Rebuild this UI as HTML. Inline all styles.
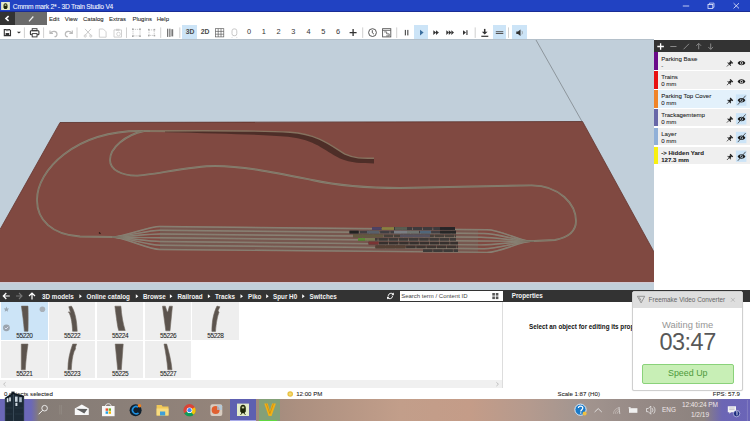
<!DOCTYPE html>
<html><head><meta charset="utf-8">
<style>
*{margin:0;padding:0;box-sizing:border-box}
html,body{width:750px;height:421px;overflow:hidden;background:#fff;font-family:"Liberation Sans",sans-serif;}
.a{position:absolute}
#menu,.row,.cell,#status,#title{-webkit-text-stroke:0.07px currentColor}
svg{position:absolute;left:0;top:0;overflow:visible}
#title{left:0;top:0;width:750px;height:12px;background:linear-gradient(#2142c2 0,#2142c2 10.6px,#1a2c94 10.6px,#1a2c94 12px);color:#f4f6ff;font-size:6.7px;line-height:12px;letter-spacing:-0.25px}
#menu{left:0;top:12px;width:750px;height:12.6px;background:#fff;font-size:6px;color:#1e1e1e}
#tool{left:0;top:24.6px;width:750px;height:14.4px;background:#fff}
#view{left:0;top:39px;width:654px;height:251px;background:#c1cfda;overflow:hidden;border-top:1px solid #b4c0ca}
#layers{left:654px;top:39.5px;width:96px;height:250.5px;background:#fff}
#nav{left:0;top:290px;width:503px;height:11.5px;background:#333;color:#f4f4f4;font-size:6.3px;font-weight:bold;line-height:13px}
#props{left:503px;top:290px;width:247px;height:11.5px;background:#333;color:#f4f4f4;font-size:6.3px;font-weight:bold;line-height:12.6px}
#grid{left:0;top:301.5px;width:502px;height:78.5px;background:#fff}
#scroll{left:0;top:380px;width:502px;height:8.3px;background:#f0f0f0}
#status{left:0;top:388.3px;width:750px;height:10.7px;background:#fff;font-size:6.1px;line-height:11px;color:#222}
#taskbar{left:0;top:399px;width:750px;height:22px;overflow:hidden;background:linear-gradient(90deg,#6b68b8 0px,#6b68b8 31px,#857c76 39px,#8a7f78 120px,#94847a 220px,#ac9080 300px,#c29e8a 400px,#c49c88 470px,#b49a8e 530px,#a49690 575px,#968a86 640px,#8c827e 704px,#6c66b4 722px,#6a64b8 750px)}
.mi{position:absolute;top:0.9px;line-height:13.4px}
.num{position:absolute;top:0;font-size:6.8px;line-height:14.8px;color:#4a4a4a;font-weight:bold;text-align:center;width:10px}
.row{position:absolute;left:0;width:96px;height:17.8px;background:#efefef;font-size:6.1px;color:#222;line-height:7px}
.row .bar{position:absolute;left:0;top:0;width:4.2px;height:100%}
.row .t{position:absolute;left:7.2px;top:2.6px;white-space:nowrap}
.cell{position:absolute;width:46.6px;height:37.8px;background:#eeeeee;font-size:6.5px;color:#1e1e1e;text-align:center;letter-spacing:-0.35px}
.cell span{position:absolute;left:0;right:0;bottom:0px;line-height:8px}
.cell svg{left:0;top:0}
.tray{position:absolute;color:#f0e8e8;font-size:6px;line-height:7px;text-align:center;white-space:nowrap}
</style></head><body>
<!-- TITLE -->
<div id="title" class="a">
  <svg width="750" height="12">
    <rect x="1.1" y="2" width="8.8" height="8" fill="#e6ecc8"/>
    <path d="M5.5 3.2c1.3 0 2 1 2 2.4v2.2l-1 1.2h-2l-1-1.2v-2.2c0-1.4 0.7-2.4 2-2.4z" fill="#1e2608"/>
    <rect x="4.6" y="4.4" width="1.8" height="1.4" fill="#c8d0a0"/>
    <path d="M682.8 6h6.4" stroke="#e8ecff" stroke-width="0.8"/>
    <rect x="708" y="4.4" width="4.8" height="4" fill="none" stroke="#e8ecff" stroke-width="0.8"/>
    <path d="M709.4 4.4v-1.3h4.6v4.2h-1.2" fill="none" stroke="#e8ecff" stroke-width="0.7"/>
    <path d="M733.6 3.2l5.4 5.2M739 3.2l-5.4 5.2" stroke="#eef0ff" stroke-width="0.8"/>
  </svg>
  <div class="a" style="left:12.8px;top:0.9px">Cmmm mark 2* - 3D Train Studio V4</div>
</div>
<!-- MENU -->
<div id="menu" class="a">
  <div class="a" style="left:0;top:0;width:15px;height:12.6px;background:#333"></div>
  <div class="a" style="left:15px;top:0;width:32px;height:12.6px;background:#6b6b6b"></div>
  <svg width="750" height="13">
    <path d="M8.6 4.2L6 6.5L8.6 8.8" fill="none" stroke="#fff" stroke-width="1.6"/>
    <path d="M29 9.3L33.3 4.5" stroke="#f0f0f0" stroke-width="1.2"/>
  </svg>
  <div class="mi" style="left:49px">Edit</div>
  <div class="mi" style="left:64.8px">View</div>
  <div class="mi" style="left:83px">Catalog</div>
  <div class="mi" style="left:109px">Extras</div>
  <div class="mi" style="left:132.4px">Plugins</div>
  <div class="mi" style="left:156.7px">Help</div>
</div>
<!-- TOOLBAR -->
<div id="tool" class="a">
  <div class="a" style="left:182.4px;top:0.2px;width:15.1px;height:13.8px;background:#cce4f7"></div>
  <div class="a" style="left:414.4px;top:0.2px;width:14.1px;height:13.8px;background:#cce4f7"></div>
  <div class="a" style="left:492.7px;top:0.2px;width:13.6px;height:13.8px;background:#cce4f7"></div>
  <div class="a" style="left:512px;top:0.2px;width:14.7px;height:13.8px;background:#cce4f7"></div>
  <svg width="750" height="15" viewBox="0 24.6 750 15">
    <g stroke="#c4c4c4" stroke-width="0.8">
      <path d="M24.4 27v10.5M43.6 27v10.5M77 27v10.5M126.5 27v10.5M160.7 27v10.5M179.8 27v10.5M362.7 27v10.5M396.7 27v10.5M475.2 27v10.5M508.5 27v10.5"/>
    </g>
    <!-- save -->
    <path d="M4.3 29.2h5.2l1 1v5h-6.2z" fill="none" stroke="#333" stroke-width="1.1"/>
    <rect x="5.6" y="32.6" width="3.6" height="2.6" fill="#333"/>
    <rect x="6" y="29.2" width="2.6" height="1.6" fill="#888"/>
    <polygon points="16.8,31.4 21,31.4 18.9,33.2" fill="#333"/>
    <!-- print -->
    <rect x="32.2" y="28.3" width="4.8" height="2" fill="none" stroke="#333" stroke-width="0.9"/>
    <rect x="30.4" y="30.3" width="8.5" height="4" rx="0.8" fill="none" stroke="#333" stroke-width="1.1"/>
    <rect x="32.2" y="33.2" width="4.8" height="3.3" fill="#fff" stroke="#333" stroke-width="0.9"/>
    <!-- undo redo -->
    <path d="M50 30v3h3M50.5 32.8c1.5-2.5 6.5-2.5 6.5 1c0 1.5-1 2.5-2.5 2.5" fill="none" stroke="#bbb" stroke-width="1.2"/>
    <path d="M72.3 30v3h-3M71.8 32.8c-1.5-2.5-6.5-2.5-6.5 1c0 1.5 1 2.5 2.5 2.5" fill="none" stroke="#bbb" stroke-width="1.2"/>
    <!-- cut -->
    <path d="M85 28.5l6 6.5M91 28.5l-6 6.5" stroke="#c4c4c4" stroke-width="0.9"/>
    <circle cx="85.2" cy="35.6" r="1.1" fill="none" stroke="#c4c4c4" stroke-width="0.8"/>
    <circle cx="90.8" cy="35.6" r="1.1" fill="none" stroke="#c4c4c4" stroke-width="0.8"/>
    <!-- copy -->
    <path d="M99.3 28.6h4l2.8 2.8v5.4h-6.8z" fill="none" stroke="#ccc" stroke-width="0.9"/>
    <!-- paste -->
    <path d="M114 29.5h7.5v7.2h-7.5z" fill="none" stroke="#ccc" stroke-width="0.9"/>
    <rect x="116" y="28.4" width="3.5" height="2" fill="#ccc"/>
    <circle cx="118.5" cy="33.6" r="1.8" fill="none" stroke="#ccc" stroke-width="0.8"/>
    <!-- group/ungroup -->
    <rect x="133" y="29" width="7" height="6.5" fill="none" stroke="#bbb" stroke-width="0.8" stroke-dasharray="1.2,0.8"/>
    <g fill="#aaa"><rect x="132" y="28" width="1.6" height="1.6"/><rect x="139.2" y="28" width="1.6" height="1.6"/><rect x="132" y="35" width="1.6" height="1.6"/><rect x="139.2" y="35" width="1.6" height="1.6"/></g>
    <rect x="149" y="29.5" width="5.2" height="5.5" fill="none" stroke="#bbb" stroke-width="0.8" stroke-dasharray="1.2,0.8"/>
    <g fill="#aaa"><rect x="148" y="28.5" width="1.5" height="1.5"/><rect x="153.7" y="28.5" width="1.5" height="1.5"/><rect x="148" y="34.5" width="1.5" height="1.5"/><rect x="153.7" y="34.5" width="1.5" height="1.5"/></g>
    <!-- layers -->
    <g fill="#777"><rect x="167" y="28.3" width="1.3" height="8.2"/><rect x="169.2" y="28.3" width="1.3" height="8.2"/><rect x="171.4" y="28.8" width="1.8" height="7.2"/></g>
    <!-- grid -->
    <g fill="none" stroke="#555" stroke-width="0.65"><rect x="215.4" y="28.3" width="8.4" height="8.2"/><path d="M218.2 28.3v8.2M221 28.3v8.2M215.4 31h8.4M215.4 33.8h8.4"/></g>
    <!-- train -->
    <rect x="232" y="28.5" width="4.8" height="6.8" rx="2" fill="none" stroke="#c8c8c8" stroke-width="1"/>
    <path d="M232.5 36.5l-0.8 1M236.3 36.5l0.8 1" stroke="#c8c8c8" stroke-width="0.7"/>
    <!-- plus -->
    <path d="M349.6 32.2h7M353.1 28.7v7" stroke="#333" stroke-width="1.3"/>
    <!-- clock -->
    <circle cx="372.5" cy="32.2" r="3.9" fill="none" stroke="#444" stroke-width="0.9"/>
    <path d="M372.3 29.8v2.6l1.6 1.3" fill="none" stroke="#444" stroke-width="0.9"/>
    <!-- calendar -->
    <rect x="382.6" y="28.3" width="8.2" height="8.2" fill="none" stroke="#555" stroke-width="0.9"/>
    <path d="M382.6 30h8.2M384.2 31.5h2.5v2h2.5v2h-3" fill="none" stroke="#555" stroke-width="0.8"/>
    <!-- pause -->
    <rect x="404.8" y="29.5" width="1.2" height="5.5" fill="#555"/><rect x="407.2" y="29.5" width="1.2" height="5.5" fill="#555"/>
    <!-- play -->
    <polygon points="420,29.3 423.6,32.2 420,35.1" fill="#3b6e9e"/>
    <!-- ff -->
    <polygon points="433.3,29.8 436.2,32.2 433.3,34.6" fill="#333"/><polygon points="436,29.8 438.9,32.2 436,34.6" fill="#333"/>
    <polygon points="446.3,29.8 449,32.2 446.3,34.6" fill="#333"/><polygon points="448.8,29.8 451.5,32.2 448.8,34.6" fill="#333"/><polygon points="451.3,29.8 454,32.2 451.3,34.6" fill="#333"/>
    <polygon points="463,29.8 466,32.2 463,34.6" fill="#333"/><rect x="466.4" y="29.8" width="1.1" height="4.8" fill="#333"/>
    <!-- download -->
    <path d="M484.7 28.5v3.8" stroke="#333" stroke-width="1.5"/><polygon points="481.8,31.3 487.6,31.3 484.7,34" fill="#333"/>
    <rect x="481.3" y="35.3" width="7" height="1.2" fill="#333"/>
    <!-- lines -->
    <rect x="495.8" y="30.8" width="7.5" height="1" fill="#555"/><rect x="495.8" y="32.6" width="7.5" height="1" fill="#555"/>
    <!-- speaker -->
    <polygon points="516.3,31 518,31 520.5,29 520.5,35.5 518,33.5 516.3,33.5" fill="#333"/>
    <path d="M521.8 30.5c0.8 0.8 0.8 2.8 0 3.5" fill="none" stroke="#888" stroke-width="0.7"/>
  </svg>
  <div class="num" style="left:185px;width:10px">3D</div>
  <div class="num" style="left:200px;width:10px">2D</div>
  <div class="num" style="left:244px;font-weight:normal;font-size:7.4px;color:#333">0</div>
  <div class="num" style="left:258.9px;font-weight:normal;font-size:7.4px;color:#333">1</div>
  <div class="num" style="left:273.5px;font-weight:normal;font-size:7.4px;color:#333">2</div>
  <div class="num" style="left:288.4px;font-weight:normal;font-size:7.4px;color:#333">3</div>
  <div class="num" style="left:303.5px;font-weight:normal;font-size:7.4px;color:#333">4</div>
  <div class="num" style="left:318.2px;font-weight:normal;font-size:7.4px;color:#333">5</div>
  <div class="num" style="left:333px;font-weight:normal;font-size:7.4px;color:#333">6</div>
</div>
<!-- 3D VIEW -->
<div id="view" class="a">
  <svg width="654" height="251" viewBox="0 40 654 251">
    <polygon points="60,122.5 582.5,121.5 654,252 654,282.2 0,282.2 0,229.5" fill="#804941"/>
    <rect x="0" y="282.2" width="654" height="1" fill="#d6d0dc"/>
    <path d="M0,229.5 L60,122.5 M582.5,121.5 L654,252" stroke="#643630" stroke-width="0.8"/>
    <path d="M60,122.5 L582.5,121.5" stroke="#5a302a" stroke-width="0.8"/>
    <line x1="536" y1="40" x2="582" y2="121.5" stroke="#6a6e72" stroke-width="0.6"/>
    <!-- yard bed -->
    <path d="M160,226.5 L478,229.2 L478,252.3 L160,249.5z" fill="#77574f"/>
    <g fill="none" stroke="#8a8373" stroke-width="1.8">
      <path d="M113,237 L80,236.5 C52,235 37,220 37,200 C37,170 75,131 140,131 L200,131.3"/>
      <path d="M144,131 C125,135 110,148 110,160 C110,170 122,175.6 136,175.6 C150,175.6 190,166 215,166 C243,166 272,172 312,180 C340,186 370,188 400,188 L531,185.3 C560,185 576,205 576,221 C576,233 565,238 555,240 L534,241"/>
    </g>
    <g fill="none" stroke="#716858" stroke-width="0.45">
      <path d="M113,237 L80,236.5 C52,235 37,220 37,200 C37,170 75,131 140,131 L200,131.3"/>
      <path d="M144,131 C125,135 110,148 110,160 C110,170 122,175.6 136,175.6 C150,175.6 190,166 215,166 C243,166 272,172 312,180 C340,186 370,188 400,188 L531,185.3 C560,185 576,205 576,221 C576,233 565,238 555,240 L534,241"/>
    </g>
    <!-- raised track -->
    <path d="M165,131 C220,130.3 265,130.6 290,132 C318,134 330,144.5 345,154 C355,158.5 362,158.2 374,158 L374,163.4 C362,163.4 351,163 340,158.5 C323,150 316,140 288,136.8 C262,134.6 220,133.4 165,132.2z" fill="#4e2e28"/>
    <path d="M150,131 C220,130.5 265,130.8 290,132.2 C318,134.2 330,144.7 345,154.2 C355,158.7 362,158.4 374,158.2" fill="none" stroke="#86725f" stroke-width="1.4"/>
    <!-- yard -->
    <g fill="none" stroke="#8e877a" stroke-width="1.45">
      <path d="M112,237 C124,237 148,226.5 160,226.5 L487,229.7 C501,229.7 520,241.3 531,241.3 L534,241.3"/>
      <path d="M112,237 C124,237 148,230.3 160,230.3 L484,233.5 C498,233.5 520,241.3 531,241.3 L534,241.3"/>
      <path d="M112,237 C124,237 148,234.0 160,234.0 L481,237.2 C495,237.2 520,241.3 531,241.3 L534,241.3"/>
      <path d="M112,237 C124,237 148,237.7 160,237.7 L478,241.0 C492,241.0 520,241.3 531,241.3 L534,241.3"/>
      <path d="M112,237 C124,237 148,241.4 160,241.4 L481,244.9 C495,244.9 520,241.3 531,241.3 L534,241.3"/>
      <path d="M112,237 C124,237 148,245.3 160,245.3 L484,248.7 C498,248.7 520,241.3 531,241.3 L534,241.3"/>
      <path d="M112,237 C124,237 148,249.5 160,249.5 L487,252.4 C501,252.4 520,241.3 531,241.3 L534,241.3"/>
    </g>
    <g fill="none" stroke="#766e60" stroke-width="0.35">
      <path d="M112,237 C124,237 148,226.5 160,226.5 L487,229.7 C501,229.7 520,241.3 531,241.3 L534,241.3"/>
      <path d="M112,237 C124,237 148,230.3 160,230.3 L484,233.5 C498,233.5 520,241.3 531,241.3 L534,241.3"/>
      <path d="M112,237 C124,237 148,234.0 160,234.0 L481,237.2 C495,237.2 520,241.3 531,241.3 L534,241.3"/>
      <path d="M112,237 C124,237 148,237.7 160,237.7 L478,241.0 C492,241.0 520,241.3 531,241.3 L534,241.3"/>
      <path d="M112,237 C124,237 148,241.4 160,241.4 L481,244.9 C495,244.9 520,241.3 531,241.3 L534,241.3"/>
      <path d="M112,237 C124,237 148,245.3 160,245.3 L484,248.7 C498,248.7 520,241.3 531,241.3 L534,241.3"/>
      <path d="M112,237 C124,237 148,249.5 160,249.5 L487,252.4 C501,252.4 520,241.3 531,241.3 L534,241.3"/>
    </g>
    <!-- trains -->
    <g stroke-width="2.8" fill="none">
      <path d="M372,228.5 H455" stroke="#3e3a3c" stroke-dasharray="9.5,0.7"/>
      <path d="M349.5,232.1 H456" stroke="#403e42" stroke-dasharray="9.5,0.7"/>
      <path d="M353,235.8 H456" stroke="#46403a" stroke-dasharray="9.5,0.7"/>
      <path d="M358,239.4 H456" stroke="#3e3a38" stroke-dasharray="9.5,0.7"/>
      <path d="M368.6,243.1 H458" stroke="#36302e" stroke-dasharray="9.5,0.7"/>
      <path d="M375.5,246.9 H458" stroke="#3c3430" stroke-dasharray="9.5,0.7"/>
      <path d="M423,250.6 H458" stroke="#3c3a38" stroke-dasharray="9.5,0.7"/>
      <path d="M372,228.5 h9" stroke="#4e4266"/>
      <path d="M382,228.5 h12" stroke="#8c8040"/>
      <path d="M395,228.5 h12" stroke="#5a5e52"/>
      <path d="M440,228.5 h15" stroke="#262426"/>
      <path d="M349.5,232.1 h9" stroke="#222"/>
      <path d="M367,232.1 h12" stroke="#58606a"/>
      <path d="M394,232.1 h13" stroke="#7a7e84"/>
      <path d="M407,232.1 h12" stroke="#6e7470"/>
      <path d="M420,232.1 h11" stroke="#50667a"/>
      <path d="M440,232.1 h16" stroke="#262626"/>
      <path d="M353,235.8 h30" stroke="#625840"/>
      <path d="M400,235.8 h30" stroke="#56525e"/>
      <path d="M358,239.4 h7" stroke="#5a8a34"/>
      <path d="M365,239.4 h10" stroke="#7a7a54"/>
      <path d="M368.6,243.1 h10" stroke="#7a3434"/>
      <path d="M375.5,246.9 h30" stroke="#544034"/>
    </g>
    <path d="M99 232.5l1.5 1.3" stroke="#2a1a16" stroke-width="1.2"/>
  </svg>
</div>
<!-- LAYERS -->
<div id="layers" class="a">
  <div class="a" style="left:0;top:0.5px;width:96px;height:11.9px;background:#333"></div>
  <div class="row" style="top:12.5px"><div class="bar" style="background:#6a0a8a"></div><div class="t">Parking Base<br>-</div></div>
  <div class="row" style="top:31.4px"><div class="bar" style="background:#e81010"></div><div class="t">Trains<br>0 mm</div></div>
  <div class="row" style="top:50.3px;background:#e3f1fb"><div class="bar" style="background:#f08428"></div><div class="t">Parking Top Cover<br>0 mm</div></div>
  <div class="row" style="top:69.2px"><div class="bar" style="background:#6868a8"></div><div class="t">Trackagemtemp<br>0 mm</div></div>
  <div class="row" style="top:88.1px"><div class="bar" style="background:#90b0d8"></div><div class="t">Layer<br>0 mm</div></div>
  <div class="row" style="top:107px"><div class="bar" style="background:#f8f010"></div><div class="t" style="font-weight:bold">-&gt; Hidden Yard<br>127.3 mm</div></div>
  <svg width="96" height="250" viewBox="654 39.5 96 250">
    <path d="M657.3 46h6.6M660.6 42.7v6.6" stroke="#fff" stroke-width="1.3"/>
    <path d="M670.3 46h6.2" stroke="#888" stroke-width="1"/>
    <path d="M683.5 48.8l5.5-5.5" stroke="#888" stroke-width="1"/>
    <path d="M698.7 48.8v-5.8M696.3 45.3l2.4-2.4 2.4 2.4" fill="none" stroke="#888" stroke-width="1"/>
    <path d="M710.7 43v5.8M708.3 46.5l2.4 2.4 2.4-2.4" fill="none" stroke="#888" stroke-width="1"/>
    <g fill="#cce4f7"><rect x="735.9" y="93.9" width="10.5" height="11.4"/><rect x="735.9" y="112.6" width="10.5" height="11.4"/><rect x="735.9" y="131.3" width="10.5" height="11.4"/><rect x="735.9" y="150" width="10.5" height="11.4"/></g>
    <path d="M726.9 66.00L729.16 63.74" stroke="#222" stroke-width="0.75"/>
    <polygon points="727.32,62.32 727.96,61.69 731.21,64.94 730.58,65.58" fill="#1e1e1e"/>
    <polygon points="728.60,62.61 730.44,61.05 731.85,62.46 730.29,64.30" fill="#1e1e1e"/>
    <polygon points="729.66,60.56 730.51,59.71 733.19,62.39 732.34,63.24" fill="#1e1e1e"/>
    <path d="M737.6 62.40C739.4 59.40 743.6 59.40 745.4 62.40C743.6 65.40 739.4 65.40 737.6 62.40z" fill="#1a1a1a"/>
    <circle cx="741.5" cy="62.40" r="1.55" fill="#efefef"/>
    <circle cx="741.5" cy="62.40" r="0.95" fill="#1a1a1a"/>
    <path d="M726.9 84.70L729.16 82.44" stroke="#222" stroke-width="0.75"/>
    <polygon points="727.32,81.02 727.96,80.39 731.21,83.64 730.58,84.28" fill="#1e1e1e"/>
    <polygon points="728.60,81.31 730.44,79.75 731.85,81.16 730.29,83.00" fill="#1e1e1e"/>
    <polygon points="729.66,79.26 730.51,78.41 733.19,81.09 732.34,81.94" fill="#1e1e1e"/>
    <path d="M737.6 81.10C739.4 78.10 743.6 78.10 745.4 81.10C743.6 84.10 739.4 84.10 737.6 81.10z" fill="#1a1a1a"/>
    <circle cx="741.5" cy="81.10" r="1.55" fill="#efefef"/>
    <circle cx="741.5" cy="81.10" r="0.95" fill="#1a1a1a"/>
    <path d="M726.9 103.40L729.16 101.14" stroke="#222" stroke-width="0.75"/>
    <polygon points="727.32,99.72 727.96,99.09 731.21,102.34 730.58,102.98" fill="#1e1e1e"/>
    <polygon points="728.60,100.01 730.44,98.45 731.85,99.86 730.29,101.70" fill="#1e1e1e"/>
    <polygon points="729.66,97.96 730.51,97.11 733.19,99.79 732.34,100.64" fill="#1e1e1e"/>
    <path d="M737.6 99.80C739.4 96.80 743.6 96.80 745.4 99.80C743.6 102.80 739.4 102.80 737.6 99.80z" fill="#1a1a1a"/>
    <circle cx="741.5" cy="99.80" r="1.55" fill="#cce4f7"/>
    <circle cx="741.5" cy="99.80" r="0.95" fill="#1a1a1a"/>
    <path d="M737.8 104.20L745.6 95.20" stroke="#2a2a2a" stroke-width="0.75"/>
    <path d="M726.9 122.10L729.16 119.84" stroke="#222" stroke-width="0.75"/>
    <polygon points="727.32,118.42 727.96,117.79 731.21,121.04 730.58,121.68" fill="#1e1e1e"/>
    <polygon points="728.60,118.71 730.44,117.15 731.85,118.56 730.29,120.40" fill="#1e1e1e"/>
    <polygon points="729.66,116.66 730.51,115.81 733.19,118.49 732.34,119.34" fill="#1e1e1e"/>
    <path d="M737.6 118.50C739.4 115.50 743.6 115.50 745.4 118.50C743.6 121.50 739.4 121.50 737.6 118.50z" fill="#1a1a1a"/>
    <circle cx="741.5" cy="118.50" r="1.55" fill="#cce4f7"/>
    <circle cx="741.5" cy="118.50" r="0.95" fill="#1a1a1a"/>
    <path d="M737.8 122.90L745.6 113.90" stroke="#2a2a2a" stroke-width="0.75"/>
    <path d="M726.9 140.80L729.16 138.54" stroke="#222" stroke-width="0.75"/>
    <polygon points="727.32,137.12 727.96,136.49 731.21,139.74 730.58,140.38" fill="#1e1e1e"/>
    <polygon points="728.60,137.41 730.44,135.85 731.85,137.26 730.29,139.10" fill="#1e1e1e"/>
    <polygon points="729.66,135.36 730.51,134.51 733.19,137.19 732.34,138.04" fill="#1e1e1e"/>
    <path d="M737.6 137.20C739.4 134.20 743.6 134.20 745.4 137.20C743.6 140.20 739.4 140.20 737.6 137.20z" fill="#1a1a1a"/>
    <circle cx="741.5" cy="137.20" r="1.55" fill="#cce4f7"/>
    <circle cx="741.5" cy="137.20" r="0.95" fill="#1a1a1a"/>
    <path d="M737.8 141.60L745.6 132.60" stroke="#2a2a2a" stroke-width="0.75"/>
    <path d="M726.9 159.50L729.16 157.24" stroke="#222" stroke-width="0.75"/>
    <polygon points="727.32,155.82 727.96,155.19 731.21,158.44 730.58,159.08" fill="#1e1e1e"/>
    <polygon points="728.60,156.11 730.44,154.55 731.85,155.96 730.29,157.80" fill="#1e1e1e"/>
    <polygon points="729.66,154.06 730.51,153.21 733.19,155.89 732.34,156.74" fill="#1e1e1e"/>
    <path d="M737.6 155.90C739.4 152.90 743.6 152.90 745.4 155.90C743.6 158.90 739.4 158.90 737.6 155.90z" fill="#1a1a1a"/>
    <circle cx="741.5" cy="155.90" r="1.55" fill="#cce4f7"/>
    <circle cx="741.5" cy="155.90" r="0.95" fill="#1a1a1a"/>
    <path d="M737.8 160.30L745.6 151.30" stroke="#2a2a2a" stroke-width="0.75"/>
  </svg>
</div>
<!-- NAV -->
<div id="nav" class="a">
  <svg width="503" height="12" viewBox="0 290 503 12">
    <path d="M3.3 296h6.5M6.3 293l-3 3 3 3" fill="none" stroke="#fff" stroke-width="1.2"/>
    <path d="M16 296h6M19 293l3 3-3 3" fill="none" stroke="#777" stroke-width="1.1"/>
    <path d="M32 299.5v-6.5M29 296l3-3 3 3" fill="none" stroke="#fff" stroke-width="1.2"/>
    <polygon points="79.4,294.2 81.9,296.2 79.4,298.2" fill="#fff"/><polygon points="135.8,294.2 138.3,296.2 135.8,298.2" fill="#fff"/><polygon points="169.9,294.2 172.4,296.2 169.9,298.2" fill="#fff"/><polygon points="207.9,294.2 210.4,296.2 207.9,298.2" fill="#fff"/><polygon points="240.5,294.2 243.0,296.2 240.5,298.2" fill="#fff"/><polygon points="266.2,294.2 268.7,296.2 266.2,298.2" fill="#fff"/><polygon points="302.2,294.2 304.7,296.2 302.2,298.2" fill="#fff"/>
    <path d="M393.2 294.2a2.9 2.9 0 0 0-5 1.6M387.6 297.8a2.9 2.9 0 0 0 5-1.6" fill="none" stroke="#fff" stroke-width="1"/>
    <polygon points="393.8,292.6 393.8,295.2 391.3,295.2" fill="#fff"/><polygon points="387,299.4 387,296.8 389.5,296.8" fill="#fff"/>
  </svg>
  <div class="a" style="left:42px">3D models</div>
  <div class="a" style="left:86.5px">Online catalog</div>
  <div class="a" style="left:143px">Browse</div>
  <div class="a" style="left:177.5px">Railroad</div>
  <div class="a" style="left:215px">Tracks</div>
  <div class="a" style="left:248px">Piko</div>
  <div class="a" style="left:273px">Spur H0</div>
  <div class="a" style="left:309.5px">Switches</div>
  <div class="a" style="left:400px;top:0.6px;width:102.5px;height:10.5px;background:#fff;color:#444;font-weight:normal;font-size:6px;line-height:10.5px;padding-left:1.2px">Search term / Content ID</div>
  <svg width="503" height="12" viewBox="0 290 503 12">
    <g fill="#555"><rect x="492.3" y="293" width="2.6" height="2.6"/><rect x="495.8" y="293" width="2.6" height="2.6"/><rect x="492.3" y="296.5" width="2.6" height="2.6"/><rect x="495.8" y="296.5" width="2.6" height="2.6"/></g>
  </svg>
</div>
<div id="props" class="a"><div class="a" style="left:8.7px">Properties</div></div>
<!-- GRID -->
<div id="grid" class="a">
  <div class="cell" style="left:1px;top:0.3px;height:38.3px;background:#cce4f7"><span>55220</span></div>
  <div class="cell" style="left:48.8px;top:0.3px;height:38.3px"><span>55222</span></div>
  <div class="cell" style="left:96.8px;top:0.3px;height:38.3px"><span>55224</span></div>
  <div class="cell" style="left:144.8px;top:0.3px;height:38.3px"><span>55226</span></div>
  <div class="cell" style="left:192px;top:0.3px;height:38.3px"><span>55228</span></div>
  <div class="cell" style="left:1px;top:39.9px;height:36.9px"><span>55221</span></div>
  <div class="cell" style="left:48.8px;top:39.9px;height:36.9px"><span>55223</span></div>
  <div class="cell" style="left:96.8px;top:39.9px;height:36.9px"><span>55225</span></div>
  <div class="cell" style="left:144.8px;top:39.9px;height:36.9px"><span>55227</span></div>
  <svg width="502" height="77" viewBox="0 301.5 502 77">
    <g fill="#5c544e" stroke="#70685f" stroke-width="0.6">
      <path d="M21.4 305.6h6.6c0.2 9 0.2 17 0 25.2h-3.6c-0.8-9-1.8-17-3-25.2z"/>
      <path d="M68.8 306.2l2.6-0.6c3.2 5 5.4 13 5.8 25.2h-4.6c-0.4-8-1.2-13-3-17.5c-0.6-1-0.8-1.5-1.3-1.5l0.5-0.6c0.8 0.3 1.3 0.8 1.8 1.4c-0.6-2-1-4-1.8-6.4z"/>
      <path d="M114.9 305.7h6c0.6 9 2 17 4.3 24.3h-6.5c-1-3-1.6-8-2.2-12c-0.6-4-1-8-1.6-12.3z"/>
      <path d="M162.5 305.7h2.8l1.8 5.6h0.8l1.5-5.6h3l-2.4 24.6h-4.2z"/>
      <path d="M217 305.6L219.9 306.3C219 308 218.4 309.5 218 310.6L219.1 311.6C217.4 316 216.2 322 215.5 330.9L211.9 330.9C211.9 321 213.3 313 217 305.6z"/>
      <path d="M21.3 343.6h6.7c-1.2 8-2.2 17-2.7 25.7h-4z"/>
      <path d="M72.7 343.6h4c-0.7 1.5-1.2 3-1.4 4l0.4 0.2c-0.6 1.6-1 2.4-1.6 3.2c-1.8 5-2.4 11-2.8 18.3h-3.4c0-9 1.6-17 4.8-25.7z"/>
      <path d="M115.2 343.6h8l-1.9 25.7h-3.6z"/>
      <path d="M164 343.6h2.7c2.2 8 4.6 17 5.3 25.7h-4.2c-0.8-9-2-17-3.8-25.7z"/>
    </g>
    <path d="M6.4 306.1l0.8 1.8 1.9 0.2-1.4 1.3 0.4 1.9-1.7-1-1.7 1 0.4-1.9-1.4-1.3 1.9-0.2z" fill="#9aa8b4"/>
    <circle cx="42.4" cy="308.7" r="2.8" fill="#a8b0b8"/>
    <circle cx="6.4" cy="327.3" r="3.4" fill="#9aa4ae"/>
    <path d="M4.8 327.3l1.2 1.2 2.2-2.2" fill="none" stroke="#eef" stroke-width="0.8"/>
  </svg>
</div>
<div id="scroll" class="a"><svg width="502" height="9" viewBox="0 380 502 9"><path d="M5.6 382.3l-2 1.9 2 1.9" fill="none" stroke="#aaa" stroke-width="0.7"/><path d="M496.4 382.3l2 1.9-2 1.9" fill="none" stroke="#aaa" stroke-width="0.7"/></svg></div>
<div class="a" style="left:502px;top:301.5px;width:248px;height:86.5px;background:#fff;border-left:1px solid #ddd"></div>
<div class="a" style="left:529px;top:322px;font-size:6.3px;font-weight:bold;color:#111;line-height:10px;white-space:nowrap">Select an object for editing its properties</div>
<!-- STATUS -->
<div id="status" class="a">
  <div class="a" style="left:4px">0 objects selected</div>
  <svg width="750" height="11" viewBox="0 388 750 11"><circle cx="290.2" cy="394" r="2.8" fill="#e8c040"/><circle cx="290.2" cy="394" r="1.6" fill="#f4d870"/></svg>
  <div class="a" style="left:296.2px">12:00 PM</div>
  <div class="a" style="left:557.6px">Scale 1:87 (H0)</div>
  <div class="a" style="left:712.8px">FPS: 57.9</div>
</div>
<!-- TASKBAR -->
<div id="taskbar" class="a">
  <div class="a" style="left:230px;top:0;width:26px;height:22px;background:#5e60b0"></div>
  <div class="a" style="left:230px;top:21px;width:26px;height:1px;background:#a8aae8"></div>
  <div class="a" style="left:258.7px;top:0;width:21px;height:22px;background:#84a078"></div>
  <div class="a" style="left:258.7px;top:21px;width:18px;height:1px;background:#60d840"></div>
  <svg width="750" height="22" viewBox="0 399 750 22">
    <!-- search -->
    <circle cx="44.6" cy="408.2" r="2.8" fill="none" stroke="#f4f4f4" stroke-width="0.9"/>
    <path d="M42.6 410.3l-4 4" stroke="#f4f4f4" stroke-width="1"/>
    <path d="M59.8 405v9.5M61.4 405v9.5" stroke="#9a948e" stroke-width="0.5"/>
    <!-- mail -->
    <path d="M74.8 408.5l7-4 7 4v6.5h-14z" fill="#f8f8f8"/>
    <path d="M76 408.8l11.5 0.3-3.2 4.5z" fill="#606060"/>
    <!-- store -->
    <path d="M102 406h12.6v10.2h-12.6z" fill="#f8f8f8"/>
    <path d="M105.5 406c0-3 5.6-3 5.6 0" fill="none" stroke="#f0f0f0" stroke-width="0.9"/>
    <rect x="105.6" y="408.4" width="2.4" height="2.4" fill="#e85030"/><rect x="108.6" y="408.4" width="2.4" height="2.4" fill="#70b020"/>
    <rect x="105.6" y="411.4" width="2.4" height="2.4" fill="#20a0e8"/><rect x="108.6" y="411.4" width="2.4" height="2.4" fill="#f8b800"/>
    <!-- ccleaner -->
    <circle cx="135.6" cy="410.2" r="6" fill="#10202e"/>
    <path d="M138.2 407.2a3.6 3.6 0 1 0 0.3 5.6" fill="none" stroke="#1e90e0" stroke-width="1.6"/>
    <circle cx="139.5" cy="405.8" r="1.8" fill="#f08020"/>
    <!-- folder -->
    <path d="M156.6 405h5l1 1.4h5.9v9.1h-11.9z" fill="#f0c858"/>
    <rect x="156.6" y="408.5" width="11.9" height="7" fill="#f8dc80"/>
    <rect x="160" y="411.5" width="5.2" height="4" fill="#40a0d8"/>
    <!-- chrome -->
    <circle cx="189.5" cy="410.2" r="6.1" fill="#db4437"/>
    <path d="M189.5 410.2L194.8 413.2A6.1 6.1 0 0 1 184.2 413.2z" fill="#0f9d58"/>
    <path d="M189.5 410.2L195.6 410.2A6.1 6.1 0 0 1 189.5 416.3z" fill="#0f9d58"/>
    <path d="M189.5 410.2L194.8 407.2A6.1 6.1 0 0 1 193.5 414.8z" fill="#f4c20d"/>
    <circle cx="189.5" cy="410.2" r="2.8" fill="#fff"/>
    <circle cx="189.5" cy="410.2" r="2.1" fill="#4285f4"/>
    <!-- app -->
    <rect x="210.4" y="404.2" width="11.9" height="11.8" rx="2" fill="#d8ccc0"/>
    <circle cx="215.6" cy="410" r="4" fill="#e06030"/>
    <rect x="217" y="405" width="5" height="5" fill="#a8c8e0" opacity="0.7"/>
    <!-- train studio -->
    <rect x="237" y="403.6" width="12" height="12.4" fill="#e4ecc8"/>
    <path d="M243 404.8c1.8 0 2.8 1.3 2.8 3.2v3.4l-1.4 1.8h-2.8l-1.4-1.8v-3.4c0-1.9 1-3.2 2.8-3.2z" fill="#1e2608"/>
    <rect x="241.8" y="406.6" width="2.4" height="1.8" fill="#c8d0a0"/>
    <path d="M240.5 415l1.4-2M245.5 415l-1.4-2" stroke="#1e2608" stroke-width="0.8"/>
    <!-- freemake -->
    <path d="M264.3 403.6h3.4l2.2 7.5 2.2-7.5h3.8l-4.3 12.4h-3z" fill="#f0b018"/>
    <path d="M266.3 403.6l3.6 10 3.6-10" fill="none" stroke="#c88808" stroke-width="0.7"/>
    <!-- tray help -->
    <circle cx="580.5" cy="409.7" r="5.6" fill="#1a7ac8" stroke="#e8f4ff" stroke-width="0.9"/>
    <path d="M578.4 408c0-2.6 4.4-2.6 4.4 0c0 1.6-2 1.8-2 3.4" fill="none" stroke="#fff" stroke-width="1.2"/>
    <circle cx="580.8" cy="413" r="0.7" fill="#fff"/>
    <circle cx="584.6" cy="413.6" r="2" fill="#f0c040"/>
    <!-- chevron -->
    <path d="M594.6 412l3.6-3.4 3.6 3.4" fill="none" stroke="#f0f0f0" stroke-width="0.8"/>
    <!-- wifi -->
    <path d="M613.5 413.8a6 6 0 0 1 6-6M615.3 413.8a4.2 4.2 0 0 1 4.2-4.2M617.1 413.8a2.4 2.4 0 0 1 2.4-2.4" fill="none" stroke="#c8c0bc" stroke-width="0.7"/>
    <path d="M619 407l0.8 7" stroke="#f0f0f0" stroke-width="0.6"/>
    <!-- battery -->
    <rect x="629" y="408.2" width="8.4" height="4.6" fill="#f0f0f0"/>
    <rect x="628.6" y="407.2" width="2" height="1.2" fill="#f0f0f0"/>
    <!-- volume -->
    <path d="M646.5 408.5h1.8l2.5-2.5v8.2l-2.5-2.5h-1.8z" fill="none" stroke="#f0f0f0" stroke-width="0.7"/>
    <path d="M652 408a3 3 0 0 1 0 4.2M653.6 406.6a5 5 0 0 1 0 7" fill="none" stroke="#f0f0f0" stroke-width="0.7"/>
    <!-- notification -->
    <path d="M727.8 406.2h8.2v6h-5l-1.6 1.6v-1.6h-1.6z" fill="#f4f4f4"/>
    <path d="M729.2 408h5.4M729.2 409.6h5.4" stroke="#9a9aaa" stroke-width="0.5"/>
    <circle cx="736.6" cy="413.6" r="3.2" fill="#1c2c80" stroke="#e8e8ff" stroke-width="0.6"/>
    <path d="M736.4 411.8l0.6-0.4v4" fill="none" stroke="#fff" stroke-width="0.8"/>
    <path d="M747.4 400v21" stroke="#9a94c8" stroke-width="0.5"/>
  </svg>
  <div class="tray" style="left:660px;top:7px;width:18px;font-size:6.4px">ENG</div>
  <div class="tray" style="left:678px;top:2.4px;width:44px;font-size:6.5px;letter-spacing:-0.1px">12:40:24 PM</div>
  <div class="tray" style="left:686px;top:11.8px;width:28px;font-size:6.5px">1/2/19</div>
</div>
<!-- TARDIS -->
<svg width="40" height="40" viewBox="0 386 40 35" style="left:0;top:386px;width:40px;height:35px;position:absolute">
  <rect x="11.4" y="391.6" width="3.2" height="2.4" fill="#18222c"/>
  <path d="M5 398.5L13 393.4L24 396.6V421H5z" fill="#1c2a36"/>
  <path d="M13.5 394v27" stroke="#3c4c5a" stroke-width="0.9"/>
  <path d="M5 398.5L13 393.4L24 396.6" fill="none" stroke="#0c141c" stroke-width="1.2"/>
  <rect x="6.8" y="398.2" width="1.6" height="4" fill="#e0e8ee"/>
  <rect x="9.2" y="397.4" width="1.6" height="4" fill="#e0e8ee"/>
  <rect x="15" y="396.6" width="2.6" height="5.2" fill="#c8d4de"/>
  <rect x="19.2" y="397.2" width="2.6" height="5" fill="#b0c0cc"/>
  <rect x="15.4" y="402.8" width="2" height="3.2" fill="#d0dae2"/>
  <path d="M6 408h6.5M15 408h8M6 414h6.5M15 414h8" stroke="#2c3c4a" stroke-width="0.6"/>
  <path d="M5.3 398.5V421M23.7 396.6V421" stroke="#30404e" stroke-width="0.8"/>
</svg>
<!-- FREEMAKE POPUP -->
<div class="a" style="left:631.6px;top:290.9px;width:111px;height:100.3px;background:#fff;border:1px solid #cfcfcf;border-radius:2px;box-shadow:0 0 1px rgba(0,0,0,0.2);overflow:hidden">
  <div class="a" style="left:0;top:0;width:110px;height:16.3px;background:#dedede"></div>
  <svg width="111" height="100" viewBox="631.6 290.9 111 100" style="left:-1px;top:-1px">
    <path d="M637 296.2h7.3l-3.6 6.6z M638.8 297.2l1.9 3.2" fill="none" stroke="#777" stroke-width="0.7"/>
    <path d="M730.6 297.8l3.8 3.8M734.4 297.8l-3.8 3.8" stroke="#aaa" stroke-width="0.7"/>
  </svg>
  <div class="a" style="left:16px;top:4.4px;font-size:6.4px;line-height:8px;color:#666;white-space:nowrap">Freemake Video Converter</div>
  <div class="a" style="left:0;top:27.6px;width:110px;text-align:center;font-size:9.4px;line-height:11px;color:#959595">Waiting time</div>
  <div class="a" style="left:0;top:38.6px;width:110px;text-align:center;font-size:23.5px;line-height:25px;color:#585858;letter-spacing:-0.5px">03:47</div>
  <div class="a" style="left:9px;top:72.6px;width:92.3px;height:19.8px;background:#c8efb6;border:1px solid #8ad27a;border-radius:2px;text-align:center;font-size:8.9px;line-height:17.8px;color:#4e9a3c">Speed Up</div>
</div>
</body></html>
